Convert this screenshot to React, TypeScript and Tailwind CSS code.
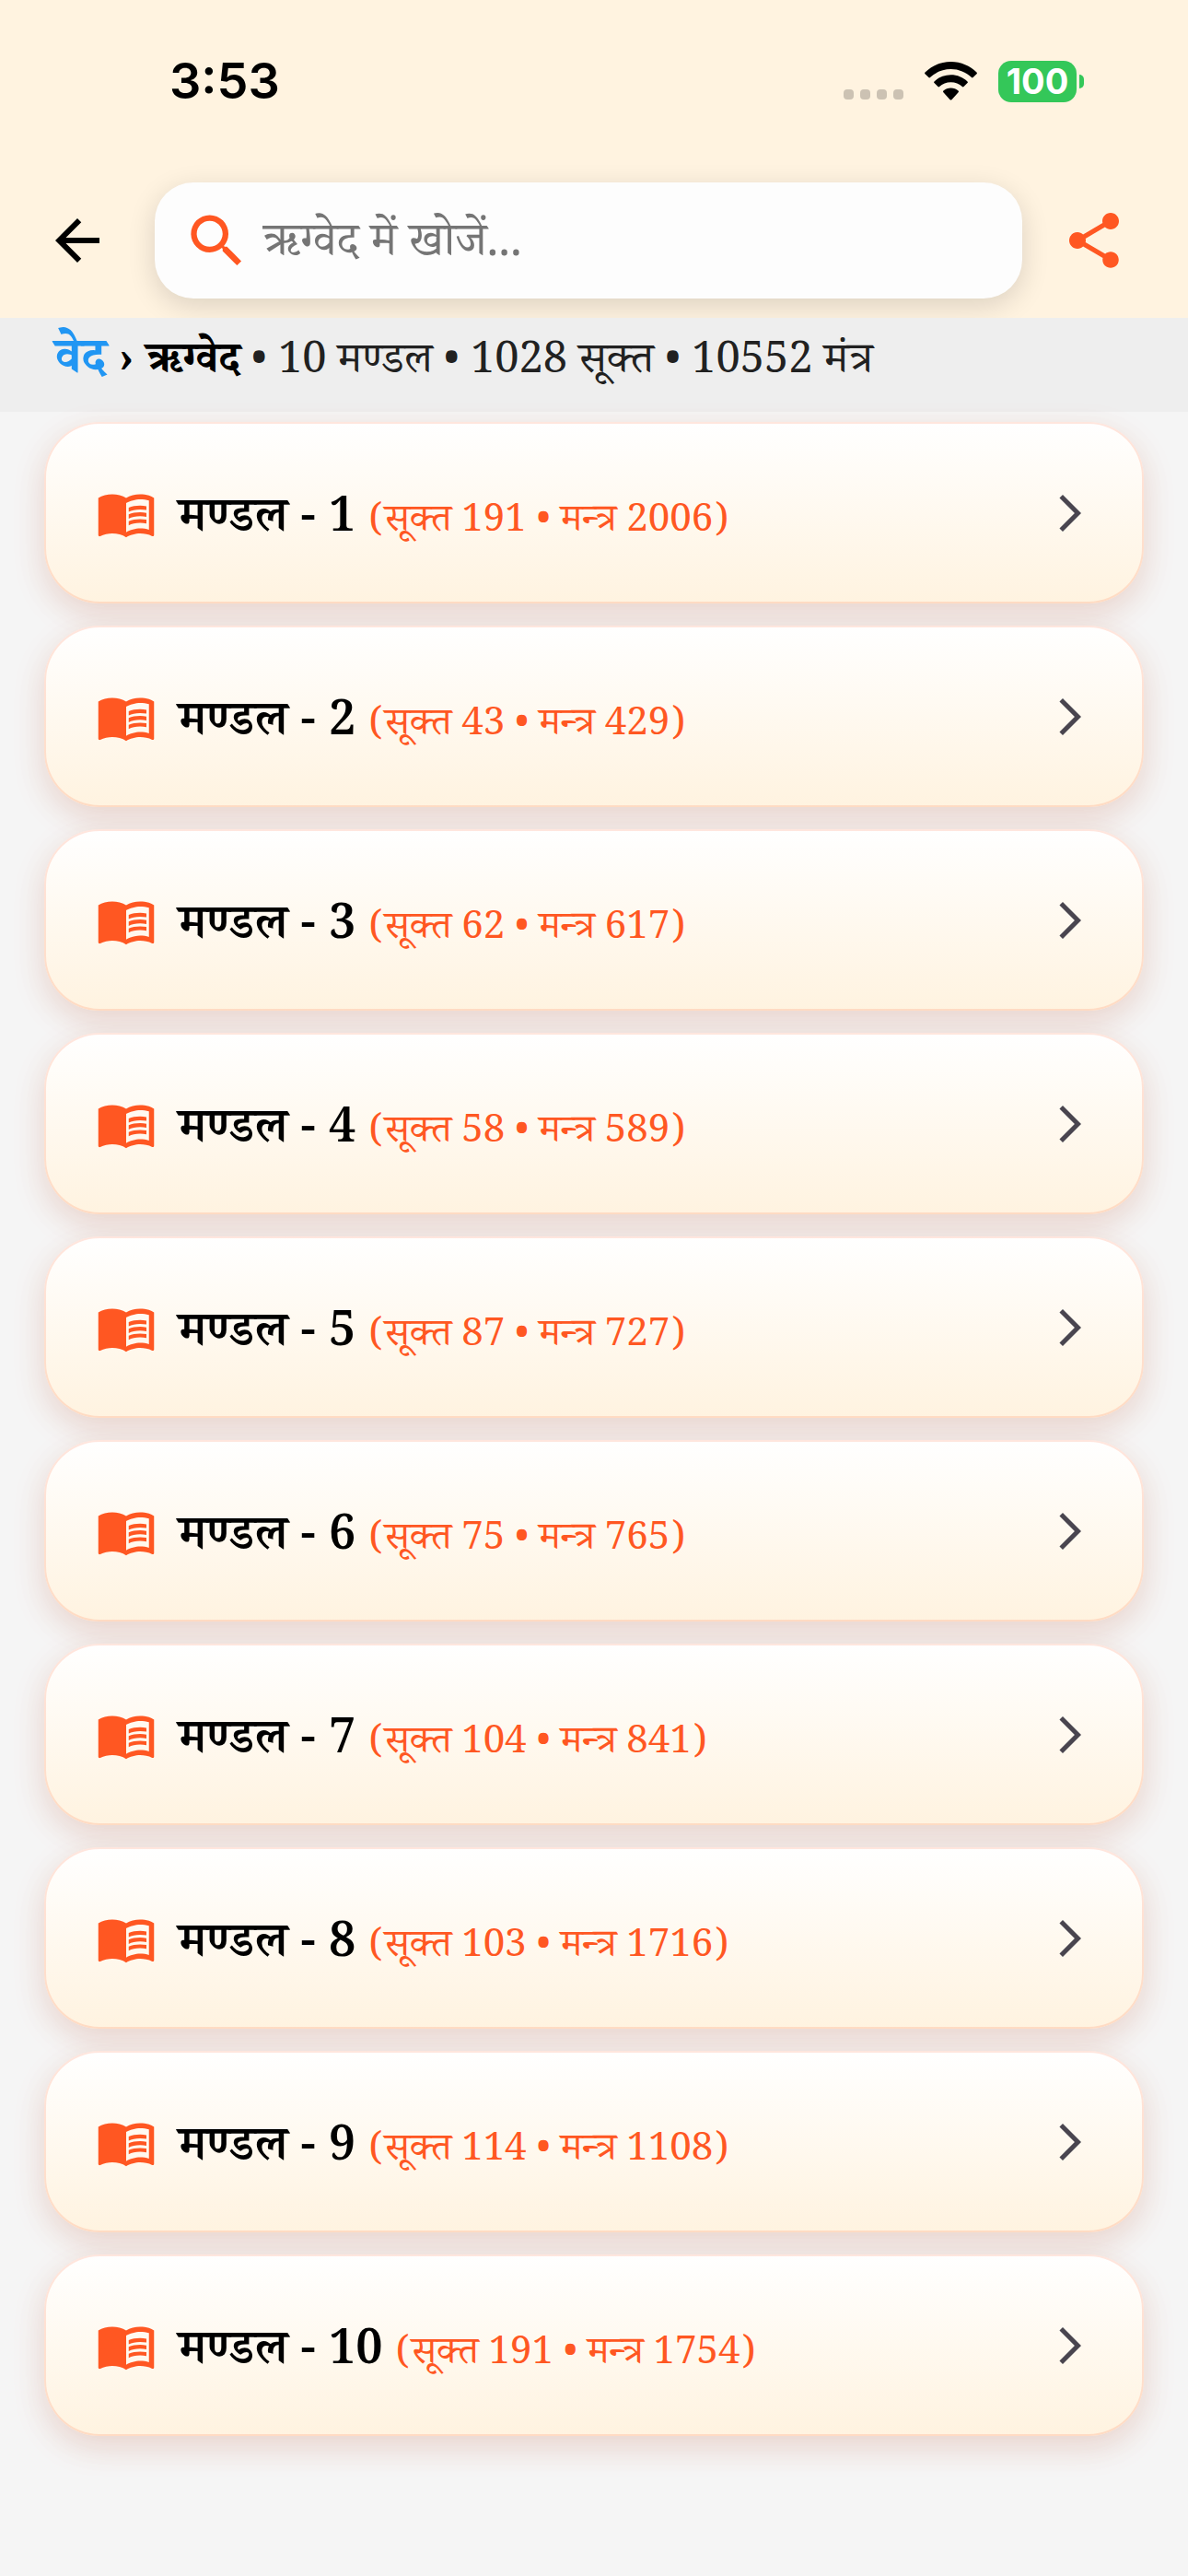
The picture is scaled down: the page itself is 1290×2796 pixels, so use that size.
import { MdArrowBack, MdArrowForwardIos, MdMenuBook, MdSearch, MdShare } from "react-icons/md";

type Mandal = {
  no: number;
  sukt: number;
  mantra: number;
};

const mandals: Mandal[] = [
  { no: 1, sukt: 191, mantra: 2006 },
  { no: 2, sukt: 43, mantra: 429 },
  { no: 3, sukt: 62, mantra: 617 },
  { no: 4, sukt: 58, mantra: 589 },
  { no: 5, sukt: 87, mantra: 727 },
  { no: 6, sukt: 75, mantra: 765 },
  { no: 7, sukt: 104, mantra: 841 },
  { no: 8, sukt: 103, mantra: 1716 },
  { no: 9, sukt: 114, mantra: 1108 },
  { no: 10, sukt: 191, mantra: 1754 },
];

const StatusBar = () => (
  <div className="flex h-[174px] items-center justify-between pl-[184px] pr-[113px] pt-0.5 font-['Inter',sans-serif]">
    <span className="text-[54px] leading-none font-semibold text-black">3:53</span>
    <div className="flex items-center">
      <div className="mr-[23px] flex gap-[7px] pt-7">
        <span className="size-[11px] rounded-[4px] bg-[#ccc2b3]" />
        <span className="size-[11px] rounded-[4px] bg-[#ccc2b3]" />
        <span className="size-[11px] rounded-[4px] bg-[#ccc2b3]" />
        <span className="size-[11px] rounded-[4px] bg-[#ccc2b3]" />
      </div>
      <svg viewBox="0 0 57 42" className="mr-[23px] h-[42px] w-[57px]" fill="#000">
        <path d="M28.5 0C39.5 0 49.5 4.5 56.5 11.6Q57.3 12.4 56.5 13.2L52.6 17.1Q51.8 17.9 51 17.1C45 11.4 37.2 8 28.5 8C19.8 8 12 11.4 6 17.1Q5.2 17.9 4.4 17.1L.5 13.2Q-.3 12.4 .5 11.6C7.5 4.5 17.5 0 28.5 0Z" />
        <path d="M28.5 14.3C35.5 14.3 41.8 17 46.5 21.4Q47.3 22.2 46.5 23L42.5 27Q41.7 27.8 40.9 27.1C37.6 24.1 33.3 22.3 28.5 22.3C23.7 22.3 19.4 24.1 16.1 27.1Q15.3 27.8 14.5 27L10.5 23Q9.7 22.2 10.5 21.4C15.2 17 21.5 14.3 28.5 14.3Z" />
        <path d="M28.5 28.6C31.6 28.6 34.4 29.7 36.6 31.6Q37.5 32.4 36.6 33.3L29.4 41.2Q28.5 42 27.6 41.2L20.4 33.3Q19.5 32.4 20.4 31.6C22.6 29.7 25.4 28.6 28.5 28.6Z" />
      </svg>
      <div className="flex h-[45px] w-[85px] items-center justify-center rounded-[14px] bg-[#34c759] text-[38px] leading-none font-bold text-white">
        100
      </div>
      <span className="ml-[3px] h-[15px] w-[5px] rounded-r-full bg-[#34c759]" />
    </div>
  </div>
);

const SearchBar = () => (
  <div className="flex h-[171px] items-center pt-[3px]">
    <button aria-label="Back" className="mx-12 text-black">
      <MdArrowBack className="size-[72px]" />
    </button>
    <label className="flex h-[126px] grow items-center rounded-[42px] bg-[#fdfdfd] px-[30px] shadow-[0_8px_30px_rgba(0,0,0,0.14)]">
      <MdSearch className="size-[75px] shrink-0 text-[#ff5722]" />
      <input
        type="text"
        aria-label="ऋग्वेद में खोजें"
        placeholder="ऋग्वेद में खोजें..."
        className="ml-3 min-w-0 grow pt-[18px] text-[51px] outline-none placeholder:text-[#757575]"
      />
    </label>
    <button aria-label="Share" className="ml-[42px] mr-[66px] text-[#ff5722]">
      <MdShare className="size-[72px]" />
    </button>
  </div>
);

const MandalCard = ({ no, sukt, mantra }: Mandal) => (
  <li>
    <button className="flex h-[197px] w-full items-center rounded-[60px] border-2 border-[#ff5722]/15 bg-linear-to-b from-white to-[#fff3e0] bg-origin-border px-[54px] text-left shadow-[0_12px_36px_rgba(255,87,34,0.13),0_12px_36px_rgba(0,0,0,0.06)]">
      <MdMenuBook className="size-[66px] shrink-0 text-[#ff5722]" />
      <span className="ml-6 grow pt-6">
        <span className="text-[52px] font-semibold text-black">मण्डल - {no} </span>
        <span className="text-[42px] text-[#ff5722]">
          (सूक्त {sukt} • मन्त्र {mantra})
        </span>
      </span>
      <MdArrowForwardIos className="size-12 shrink-0 text-[#49454f]" />
    </button>
  </li>
);

export default function App() {
  return (
    <div className="min-h-screen bg-[#f5f5f5] font-['Noto_Serif_Devanagari','Noto_Serif',serif]">
      <header className="overflow-hidden bg-[#fff3e0]">
        <StatusBar />
        <SearchBar />
      </header>
      <nav className="h-[102px] bg-[#eee] px-[60px] pt-[18px] text-[47px] leading-[66px] text-[#212121]">
        <a href="#" className="text-[54px] font-bold text-[#2196f3]">वेद</a>
        <span className="font-bold text-black"> › ऋग्वेद</span> • 10 मण्डल • 1028 सूक्त • 10552 मंत्र
      </nav>
      <ul className="flex flex-col gap-6 px-12 pt-[11px] pb-12">
        {mandals.map((mandal) => (
          <MandalCard key={mandal.no} {...mandal} />
        ))}
      </ul>
    </div>
  );
}
